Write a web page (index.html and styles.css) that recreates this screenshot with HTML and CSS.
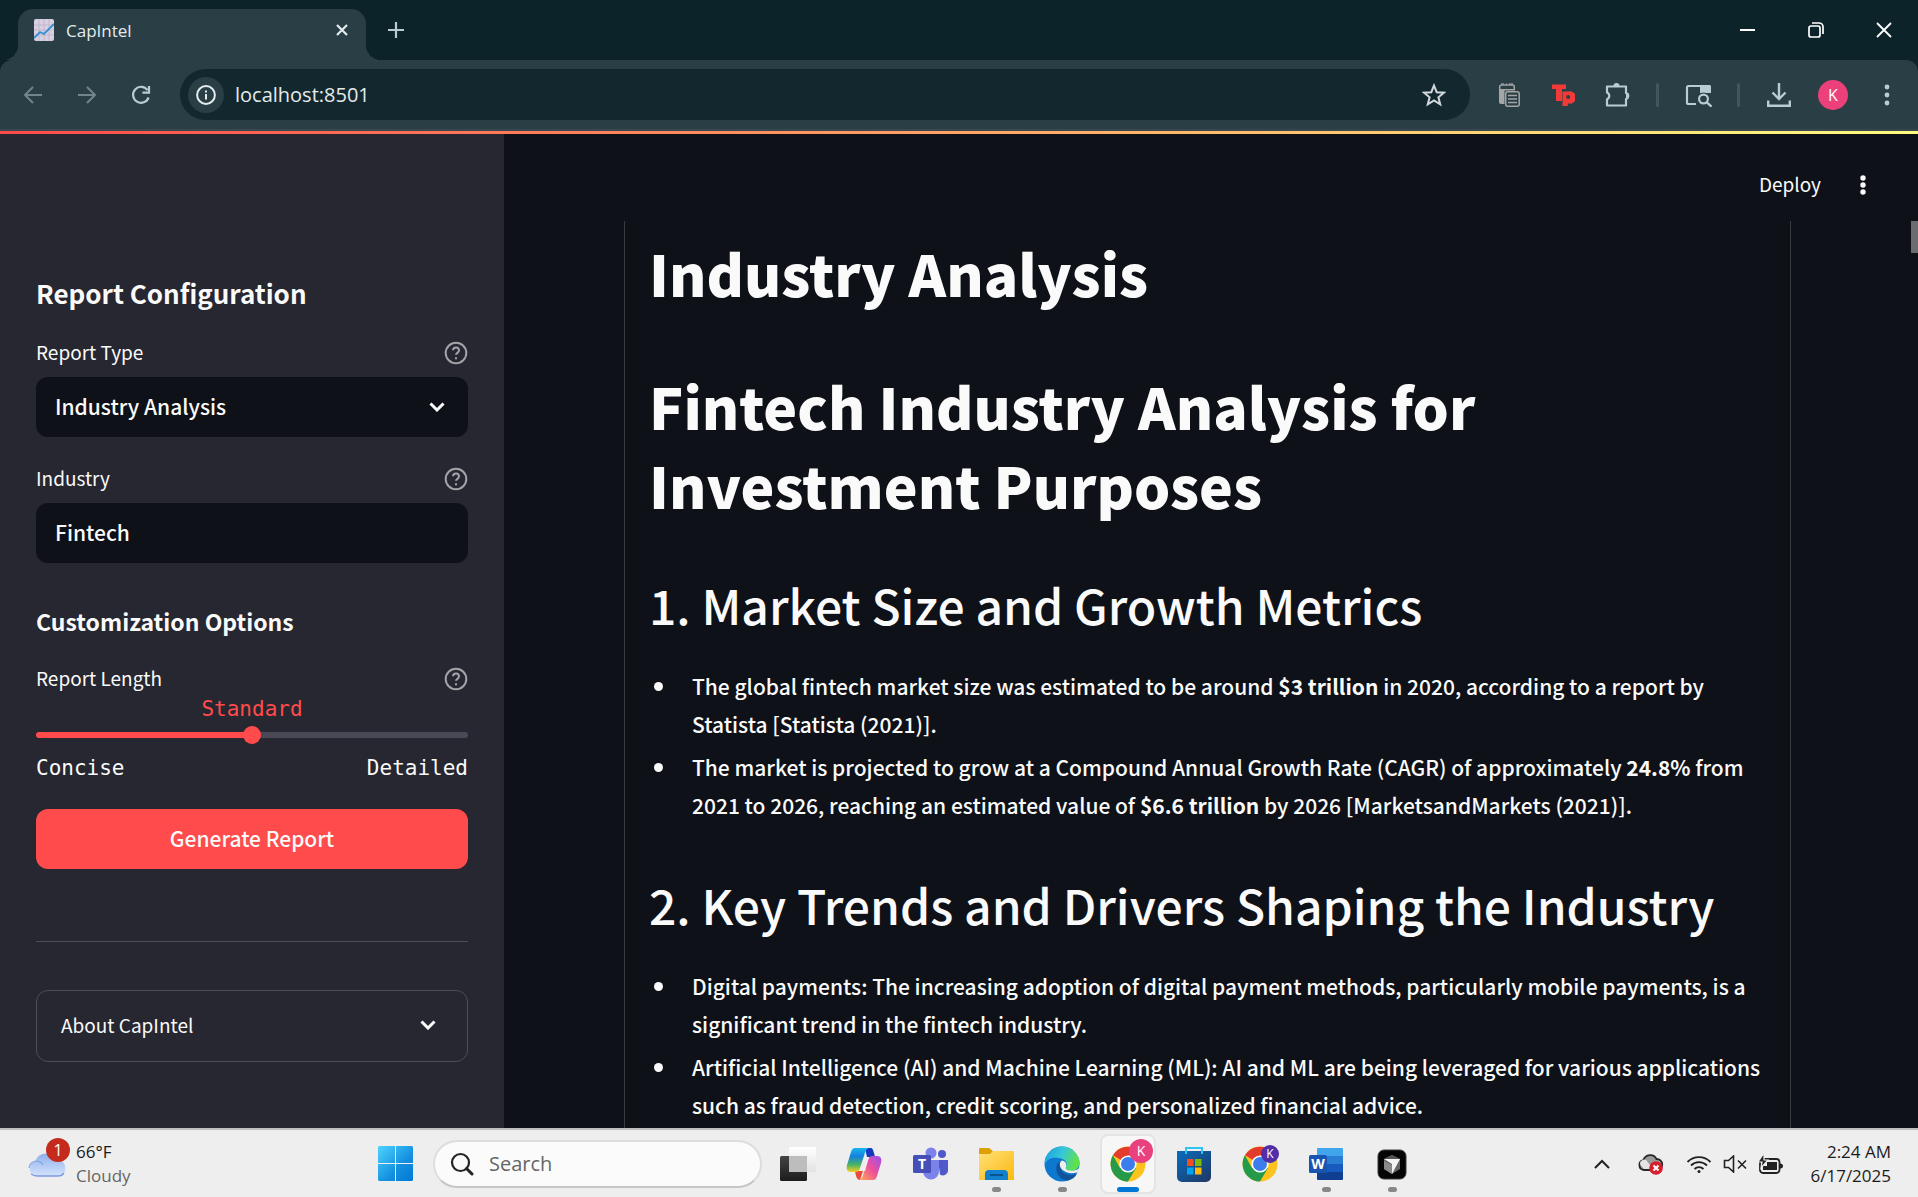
FILE: index.html
```html
<!DOCTYPE html>
<html lang="en">
<head>
<meta charset="utf-8">
<meta name="viewport" content="width=device-width, initial-scale=1">
<title>CapIntel</title>
<link rel="stylesheet" href="styles.css">
</head>
<body>
<div class="desktop">

  <header class="browser">
    <div class="tabstrip">
      <div class="tab">
        <svg class="favicon" viewBox="0 0 20 22" width="20" height="22" aria-hidden="true"><rect width="20" height="22" rx="2" fill="#d9cfe2"/><path d="M0 6h20M0 11h20M0 16h20M5 0v22M10 0v22M15 0v22" stroke="#b9afc6" stroke-width=".7"/><path d="M0 19l6-6 4 2 10-10" fill="none" stroke="#2f8fd0" stroke-width="1.8"/></svg>
        <span class="tab-title">CapIntel</span>
        <button class="icon-button tab-close" aria-label="Close tab"><svg viewBox="0 0 12 12" width="12" height="12"><path d="M1 1l10 10M11 1L1 11" stroke="#e4ebed" stroke-width="2.2"/></svg></button>
      </div>
      <button class="icon-button tab-new" aria-label="New tab"><svg viewBox="0 0 16 16" width="16" height="16"><path d="M8 0v16M0 8h16" stroke="#b8ccd4" stroke-width="2.2"/></svg></button>
      <div class="window-controls">
        <button class="icon-button" aria-label="Minimize"><svg viewBox="0 0 16 16" width="16" height="16"><path d="M0 8h15" stroke="#fff" stroke-width="2"/></svg></button>
        <button class="icon-button" aria-label="Restore"><svg viewBox="0 0 16 16" width="16" height="16" fill="none" stroke="#fff" stroke-width="1.7"><rect x="1" y="4" width="11" height="11" rx="2"/><path d="M4 1h7a4 4 0 0 1 4 4v7"/></svg></button>
        <button class="icon-button" aria-label="Close"><svg viewBox="0 0 16 16" width="16" height="16"><path d="M1 1l14 14M15 1L1 15" stroke="#fff" stroke-width="1.8"/></svg></button>
      </div>
    </div>

    <div class="toolbar">
      <button class="icon-button tool" aria-label="Back"><svg viewBox="0 0 20 20" width="20" height="20" fill="none" stroke="#72858b" stroke-width="2"><path d="M19 10H2M10 2l-8 8 8 8"/></svg></button>
      <button class="icon-button tool" aria-label="Forward"><svg viewBox="0 0 20 20" width="20" height="20" fill="none" stroke="#72858b" stroke-width="2"><path d="M1 10h17M10 2l8 8-8 8"/></svg></button>
      <button class="icon-button tool" aria-label="Reload"><svg viewBox="0 0 20 20" width="20" height="20" fill="none" stroke="#b8ccd4" stroke-width="2.2"><path d="M17.6 12.5A8 8 0 1 1 16.5 5"/><path d="M18 1v6.600h-6.600"/></svg></button>
      <div class="omnibox">
        <button class="icon-button site-info" aria-label="Site information"><svg viewBox="0 0 20 20" width="20" height="20"><circle cx="10" cy="10" r="8.900" fill="none" stroke="#e4ebed" stroke-width="2"/><path d="M10 9v5.500M10 5.400v2" stroke="#e4ebed" stroke-width="2"/></svg></button>
        <input class="address" type="text" value="localhost:8501" aria-label="Address">
        <button class="icon-button tool" aria-label="Bookmark"><svg viewBox="0 0 24 24" width="24" height="24"><path d="M12 2.500l2.700 6.700 7.200.5-5.500 4.600 1.800 7-6.200-3.900-6.200 3.900 1.800-7-5.500-4.600 7.200-.5z" fill="none" stroke="#d3d9dc" stroke-width="2"/></svg></button>
      </div>
      <div class="extensions">
        <button class="icon-button tool" aria-label="Clipboard"><svg viewBox="0 0 22 24" width="22" height="24"><path d="M3 1h3M8 1h1M11 1h4" stroke="#8f9496" stroke-width="1.500"/><path d="M1 6h16v15H3a2 2 0 0 1-2-2z" fill="#a3a5a6"/><path d="M1.700 6V4q0-2 2-2h10.600q2 0 2 2v2" fill="none" stroke="#a3a5a6" stroke-width="1.500"/><rect x="6.500" y="7.500" width="15.500" height="16.500" fill="#293f45"/><rect x="7.700" y="8.700" width="13.500" height="14.500" rx="2" fill="#293f45" stroke="#a3a5a6" stroke-width="1.500"/><path d="M10 12.500h9M10 16h9M10 19.500h9" stroke="#a3a5a6" stroke-width="1.500"/></svg></button>
        <button class="icon-button tool" aria-label="Teleprompter"><svg viewBox="0 0 24 24" width="24" height="24"><path d="M1 1.500h14v4.500h-4v12H5V6H1z" fill="#f23b36"/><path d="M11.500 8.500h5.300a6.200 6.200 0 1 1 0 11.800V23h-5.300z" fill="#f23b36"/><circle cx="17.200" cy="14" r="2" fill="#293f45"/></svg></button>
        <button class="icon-button tool" aria-label="Extensions"><svg viewBox="0 0 26 26" width="26" height="26"><path d="M3 4.500h19v6.500a3.200 3.200 0 0 1 0 6v6.500H3v-6.300a3.600 3.600 0 0 0 0-6.700z" fill="none" stroke="#b8ccd4" stroke-width="2.200" stroke-linejoin="round"/><path d="M9.500 4a3 3 0 0 1 6 0zM22 10.500a3.300 3.300 0 0 1 0 6.600z" fill="#b8ccd4"/></svg></button>
        <span class="tool-divider"></span>
        <button class="icon-button tool" aria-label="Search this page"><svg viewBox="0 0 27 24" width="27" height="24"><path d="M11 21H3.500A1.500 1.500 0 0 1 2 19.500v-15A1.500 1.500 0 0 1 3.500 3H24v6" fill="none" stroke="#b8ccd4" stroke-width="2.200"/><path d="M15 2h9.500a1.500 1.500 0 0 1 1.500 1.500V10H15z" fill="#b8ccd4"/><circle cx="18.500" cy="16" r="6.500" fill="#293f45"/><circle cx="18.500" cy="16" r="4.400" fill="none" stroke="#b8ccd4" stroke-width="2.200"/><path d="M21.500 19l5 4.700" stroke="#b8ccd4" stroke-width="2.400"/></svg></button>
        <span class="tool-divider"></span>
        <button class="icon-button tool" aria-label="Downloads"><svg viewBox="0 0 24 24" width="24" height="24" fill="none" stroke="#b8ccd4" stroke-width="2.400"><path d="M12 0v16M5.500 9.500L12 16l6.500-6.500"/><path d="M1.200 17.500v5.300h21.600v-5.300"/></svg></button>
        <button class="icon-button tool" aria-label="Profile"><span class="avatar">K</span></button>
        <button class="icon-button tool" aria-label="Menu"><svg viewBox="0 0 6 22" width="6" height="22" fill="#b8ccd4"><circle cx="3" cy="3" r="2.400"/><circle cx="3" cy="11" r="2.400"/><circle cx="3" cy="19" r="2.400"/></svg></button>
      </div>
    </div>
  </header>

  <div class="app">
    <aside class="sidebar">
      <h2 class="side-title">Report Configuration</h2>

      <div class="field-head">
        <label for="report-type">Report Type</label>
        <svg class="help" viewBox="0 0 24 24" width="24" height="24"><circle cx="12" cy="12" r="10.300"/><path d="M9 9.300a3 3 0 0 1 6 .3c0 2-3 2.500-3 4.200M12 16.200v2"/></svg>
      </div>
      <div class="select-wrap">
        <select class="control" id="report-type"><option>Industry Analysis</option></select>
        <svg class="chevron" viewBox="0 0 16 10" width="16" height="10"><path d="M1.500 1.500l6.500 6.500 6.500-6.500"/></svg>
      </div>

      <div class="field-head">
        <label for="industry">Industry</label>
        <svg class="help" viewBox="0 0 24 24" width="24" height="24"><circle cx="12" cy="12" r="10.300"/><path d="M9 9.300a3 3 0 0 1 6 .3c0 2-3 2.500-3 4.200M12 16.200v2"/></svg>
      </div>
      <input class="control" id="industry" type="text" value="Fintech">

      <h3 class="side-subtitle">Customization Options</h3>
      <div class="field-head slider-head">
        <label for="length">Report Length</label>
        <svg class="help" viewBox="0 0 24 24" width="24" height="24"><circle cx="12" cy="12" r="10.300"/><path d="M9 9.300a3 3 0 0 1 6 .3c0 2-3 2.500-3 4.200M12 16.200v2"/></svg>
      </div>
      <output class="slider-value" for="length">Standard</output>
      <input class="slider" id="length" type="range" min="0" max="2" value="1">
      <div class="slider-ends"><span>Concise</span><span>Detailed</span></div>

      <button class="generate">Generate Report</button>
      <hr class="rule">
      <details class="about">
        <summary>About CapIntel<svg class="chevron-inline" viewBox="0 0 16 10" width="16" height="10"><path d="M1.500 1.500l6.500 6.500 6.500-6.500"/></svg></summary>
      </details>
    </aside>

    <main class="main">
      <div class="app-header">
        <button class="deploy">Deploy</button>
        <button class="icon-button" aria-label="App menu"><svg viewBox="0 0 6 20" width="6" height="20" fill="#fafafa"><circle cx="3" cy="3" r="2.700"/><circle cx="3" cy="10" r="2.700"/><circle cx="3" cy="17" r="2.700"/></svg></button>
      </div>
      <div class="scroller">
        <article class="report">
          <h1>Industry Analysis</h1>
          <h1>Fintech Industry Analysis for Investment Purposes</h1>
          <h2>1. Market Size and Growth Metrics</h2>
          <ul>
            <li>The global fintech market size was estimated to be around <strong>$3 trillion</strong> in 2020, according to a report by Statista [Statista (2021)].</li>
            <li>The market is projected to grow at a Compound Annual Growth Rate (CAGR) of approximately <strong>24.8%</strong> from 2021 to 2026, reaching an estimated value of <strong>$6.6 trillion</strong> by 2026 [MarketsandMarkets (2021)].</li>
          </ul>
          <h2>2. Key Trends and Drivers Shaping the Industry</h2>
          <ul>
            <li>Digital payments: The increasing adoption of digital payment methods, particularly mobile payments, is a significant trend in the fintech industry.</li>
            <li>Artificial Intelligence (AI) and Machine Learning (ML): AI and ML are being leveraged for various applications such as fraud detection, credit scoring, and personalized financial advice.</li>
          </ul>
        </article>
        <div class="scroll-thumb"></div>
      </div>
    </main>
  </div>

  <footer class="taskbar">
    <div class="weather">
      <div class="weather-icon">
        <svg viewBox="0 0 38 26" width="38" height="26"><defs><linearGradient id="cl" x1="0" y1="0" x2="0" y2="1"><stop offset="0" stop-color="#8fb0ee"/><stop offset="1" stop-color="#d3e2fa"/></linearGradient></defs><path d="M8 25a7.500 7.500 0 0 1-1-14.500A12 12 0 0 1 29 9a8 8 0 0 1 1 16z" fill="url(#cl)"/><path d="M1 17a7.500 7.500 0 0 1 14-3" fill="none" stroke="#86a6e4" stroke-width="1.200"/><path d="M3 23q3 2 6 2h21q4 0 6-3" fill="none" stroke="#7b9be0" stroke-width="1.400"/></svg>
        <span class="badge">1</span>
      </div>
      <div class="weather-text"><span>66°F</span><span class="muted">Cloudy</span></div>
    </div>

    <button class="icon-button" aria-label="Start"><svg viewBox="0 0 35 35" width="35" height="35"><defs><linearGradient id="wn" x1="0" y1="0" x2="1" y2="1"><stop offset="0" stop-color="#4fd3ff"/><stop offset=".6" stop-color="#1490df"/><stop offset="1" stop-color="#0078d4"/></linearGradient></defs><path d="M1 0h16v17H0V1zM18 0h16l1 1v16H18zM0 18h17v17H1l-1-1zM18 18h17v16l-1 1H18z" fill="url(#wn)"/></svg></button>
    <label class="search">
      <svg viewBox="0 0 24 24" width="24" height="24" fill="none" stroke="#242424"><circle cx="10.500" cy="10.500" r="8.500" stroke-width="2.200"/><path d="M16.500 16.500l5.500 5.500" stroke-width="3" stroke-linecap="round"/></svg>
      <input type="text" placeholder="Search" aria-label="Search">
    </label>

    <nav class="pins">
      <button class="pin" aria-label="Task view"><svg viewBox="0 0 36 36" width="36" height="36"><defs><linearGradient id="tv" x1="0" y1="0" x2="0" y2="1"><stop offset="0" stop-color="#444"/><stop offset="1" stop-color="#1c1c1c"/></linearGradient><linearGradient id="tw" x1="0" y1="0" x2="0" y2="1"><stop offset="0" stop-color="#fff"/><stop offset="1" stop-color="#e2e2e2"/></linearGradient></defs><rect x="0" y="10" width="27" height="25" rx="1.500" fill="url(#tv)"/><rect x="9" y="1" width="27" height="25" rx="1.500" fill="url(#tw)"/><rect x="9" y="10" width="18" height="16" fill="#bdbdbd"/></svg></button>
      <button class="pin" aria-label="Copilot"><svg viewBox="0 0 36 36" width="36" height="36"><defs><linearGradient id="cp1" x1="0" y1="0" x2="0" y2="1"><stop offset="0" stop-color="#18b5f0"/><stop offset=".35" stop-color="#1480dd"/><stop offset=".7" stop-color="#4cb463"/><stop offset="1" stop-color="#f6cf1c"/></linearGradient><linearGradient id="cp2" x1="1" y1="0" x2="0" y2="1"><stop offset="0" stop-color="#9a4ff0"/><stop offset=".5" stop-color="#ee5098"/><stop offset="1" stop-color="#ffab52"/></linearGradient></defs><path d="M19 2h5c3 0 3 2 4 5l1 4h-8z" fill="#1738bd"/><path d="M9 25h8l-3 9c-3 0-4-3-5-9z" fill="#ea4b3b"/><path d="M9 2h14c-3 1-4 4-5 8l-4 12c-1 3-2 4-5 4H5c-4 0-5-3-4-7l4-13c1-3 2-4 4-4z" fill="url(#cp1)"/><path d="M27 34H13c3-1 4-4 5-8l4-12c1-3 2-4 5-4h4c4 0 5 3 4 7l-4 13c-1 3-2 4-4 4z" fill="url(#cp2)"/><path d="M18 11h5l-4 14h-5z" fill="#eee"/></svg></button>
      <button class="pin" aria-label="Teams"><svg viewBox="0 0 36 36" width="36" height="36"><circle cx="19" cy="7" r="5.500" fill="#7b83eb"/><circle cx="30" cy="8" r="4" fill="#5059c9"/><path d="M26 14h10v11a5 5 0 0 1-8 3.500z" fill="#5059c9"/><path d="M11 14h16v11a8 8 0 0 1-16 1z" fill="#7b83eb"/><rect x="1" y="9" width="18" height="18" rx="1.500" fill="#464eb8"/><text x="10" y="23" class="letter">T</text></svg></button>
      <button class="pin is-open" aria-label="File Explorer"><svg viewBox="0 0 36 36" width="36" height="36"><defs><linearGradient id="fo" x1="0" y1="0" x2="1" y2="1"><stop offset="0" stop-color="#ffe07a"/><stop offset="1" stop-color="#fbb90e"/></linearGradient></defs><path d="M1 9V3q0-1 1-1h9l4 3-3 4z" fill="#dda005"/><path d="M1 8h11l3-3h20q1 0 1 1v28H1z" fill="url(#fo)"/><path d="M7 34v-6q0-4 4-4h15q4 0 4 4v6z" fill="#1180cf"/><path d="M12 29h13" stroke="#0a548f" stroke-width="2"/></svg></button>
      <button class="pin is-open" aria-label="Edge"><svg viewBox="0 0 36 36" width="36" height="36"><defs><linearGradient id="e1" x1="0" y1="0" x2="1" y2=".3"><stop offset="0" stop-color="#1a9ee0"/><stop offset=".55" stop-color="#36c8d8"/><stop offset="1" stop-color="#61e04e"/></linearGradient></defs><circle cx="18" cy="18" r="17.500" fill="#0d78cf"/><path d="M1 14A17.500 17.500 0 0 1 35.500 17c0 5-4 8-9 8-4 0-6-2-5-4 3-5-1-8-7-9C9 11 4 12 1 18z" fill="url(#e1)"/><path d="M14 17c-4 5-1 17 10 17.500 4-1 7-3 9-7-6 3-14 1-16-4-1-3 0-5 2-7-2-1-4 0-5 .5z" fill="#11539b"/><path d="M18 14.500c-3 2-3 6 0 9 4 3.500 9 4.500 15 3l3-3v-2c-3 3-7 3.500-11 3-3-.5-4-2-3-4 1-3-1-5.500-4-6z" fill="#eee"/></svg></button>
      <button class="pin is-active" aria-label="Chrome"><svg viewBox="0 0 36 36" width="36" height="36"><circle cx="18" cy="18" r="17.500" fill="#fcc31e"/><path d="M18 18L2.900 9.300A17.500 17.500 0 0 1 33.200 9.500H18z" fill="#e33b2e"/><path d="M2.900 9.300A17.500 17.500 0 0 0 18 35.500l8-13.500-8-4-8 4z" fill="#259b4a"/><circle cx="18" cy="18" r="8.600" fill="#fff"/><circle cx="18" cy="18" r="7" fill="#3b7ded"/></svg><span class="pin-user">K</span></button>
      <button class="pin" aria-label="Store"><svg viewBox="0 0 36 36" width="36" height="36"><defs><linearGradient id="st" x1="0" y1="0" x2="1" y2="1"><stop offset="0" stop-color="#0a6cbd"/><stop offset="1" stop-color="#1f3763"/></linearGradient></defs><path d="M1 5h34v26a5 5 0 0 1-5 5H6a5 5 0 0 1-5-5z" fill="url(#st)"/><path d="M10 8V2h16v6" fill="none" stroke="#2dc5f2" stroke-width="2"/><path d="M11 13h6.500v7H11z" fill="#f25022"/><path d="M19 13h6.500v7H19z" fill="#7fba00"/><path d="M11 21.500h6.500v7H11z" fill="#00a4ef"/><path d="M19 21.500h6.500v7H19z" fill="#ffb900"/></svg></button>
      <button class="pin" aria-label="Chrome, second profile"><svg viewBox="0 0 36 36" width="36" height="36"><circle cx="18" cy="18" r="17.500" fill="#fcc31e"/><path d="M18 18L2.900 9.300A17.500 17.500 0 0 1 33.200 9.500H18z" fill="#e33b2e"/><path d="M2.900 9.300A17.500 17.500 0 0 0 18 35.500l8-13.500-8-4-8 4z" fill="#259b4a"/><circle cx="18" cy="18" r="8.600" fill="#fff"/><circle cx="18" cy="18" r="7" fill="#3b7ded"/></svg><span class="pin-user pin-user-small">K</span></button>
      <button class="pin is-open" aria-label="Word"><svg viewBox="0 0 36 36" width="36" height="36"><path d="M10 2h24q1 0 1 1v7H9V3q0-1 1-1z" fill="#41a5ee"/><path d="M9 10h26v8H9z" fill="#2b7cd3"/><path d="M9 18h26v8H9z" fill="#185abd"/><path d="M9 26h26v7q0 1-1 1H10q-1 0-1-1z" fill="#103f91"/><rect x="1" y="9" width="18" height="18" rx="1.500" fill="#1855b0"/><text x="10" y="23" class="letter">W</text></svg></button>
      <button class="pin is-open" aria-label="Cursor"><svg viewBox="0 0 36 36" width="36" height="36"><rect x="4" y="4" width="28" height="29" rx="6" fill="#050505" stroke="#3a3a3a"/><path d="M18 9l8 4v10l-8 5-8-5V13z" fill="#666"/><path d="M10 13l8-4 8 4-8 2z" fill="#555"/><path d="M10 13h16l-8 15V18z" fill="#f4f4f4"/><path d="M10 15l8 4v9l-8-5z" fill="#8a8a8a"/></svg></button>
    </nav>

    <div class="tray">
      <svg class="tray-up" viewBox="0 0 16 10" width="16" height="10"><path d="M1 9l7-7 7 7" fill="none" stroke="#222" stroke-width="2"/></svg>
      <svg class="tray-cloud" viewBox="0 0 26 22" width="26" height="22"><path d="M6 17a5 5 0 0 1-.5-9.900A7 7 0 0 1 18.500 6 5.500 5.500 0 0 1 19 17z" fill="#9b9b9b" stroke="#262626" stroke-width="1.800"/><path d="M2.500 12a3.500 3.500 0 0 1 7-3l6 7H6z" fill="#e4e4e4"/><circle cx="18" cy="15" r="6.800" fill="#d81e2c"/><path d="M15.500 12.500l5 5M20.500 12.500l-5 5" stroke="#fff" stroke-width="2"/></svg>
      <svg viewBox="0 0 26 20" width="26" height="20" fill="none" stroke="#222" stroke-width="1.800"><path d="M1.500 8a16 16 0 0 1 23 0M5 11.500a11.300 11.300 0 0 1 16 0M8.500 15a6.300 6.300 0 0 1 9 0"/><circle cx="13" cy="17.500" r="1.500" fill="#222" stroke="none"/></svg>
      <svg viewBox="0 0 24 18" width="24" height="18" fill="none" stroke="#222" stroke-width="1.600"><path d="M1.500 5.500v7h4l5 4.500V1l-5 4.500z"/><path d="M15 5.500l8 8M23 5.500l-8 8"/></svg>
      <svg viewBox="0 0 26 20" width="26" height="20"><rect x="2" y="5" width="19.500" height="14" rx="3" fill="none" stroke="#222" stroke-width="1.800"/><path d="M9 8h10v8H5v-4h4z" fill="#222"/><path d="M22 9.500q3 0 3 2.500t-3 2.500z" fill="#222"/><path d="M6-1L0 8h4l-1 6 7-8H6z" fill="#222" stroke="#eee" stroke-width="1.200"/></svg>
      <div class="clock"><span>2:24 AM</span><span>6/17/2025</span></div>
    </div>
  </footer>
</div>
</body>
</html>
```
FILE: styles.css
```css
* { box-sizing: border-box; }

:root {
  --source: "Noto Sans CJK SC", sans-serif;
  --source-mono: "DejaVu Sans Mono", monospace;
  --system: "Open Sans", sans-serif;
  --strip: #0c2329;
  --bar: #293f45;
  --page: #0e1117;
  --side: #262730;
  --red: #ff4b4b;
  --text: #fafafa;
}

body { margin: 0; background: var(--page); }
h1, h2, h3, ul { margin: 0; padding: 0; }
button, input, select { font: inherit; color: inherit; }

.desktop {
  display: flex;
  flex-direction: column;
  height: 100vh;
  overflow: hidden;
}

.icon-button {
  display: flex;
  align-items: center;
  justify-content: center;
  padding: 0;
  border: 0;
  background: none;
}

/* Browser chrome */
.browser {
  flex: none;
  background: var(--strip);
  font-family: var(--system);
  color: #e4ebed;
}

.tabstrip { display: flex; height: 60px; padding-left: 18px; }

.tab {
  position: relative;
  display: flex;
  align-items: center;
  flex: 0 1 348px;
  margin-top: 9px;
  padding: 0 18px 9px 16px;
  border-radius: 15px 15px 0 0;
  background: var(--bar);
}

.tab::before, .tab::after {
  content: "";
  position: absolute;
  bottom: 0;
  width: 15px;
  height: 15px;
}
.tab::before { right: 100%; background: radial-gradient(circle at 0 0, transparent 15px, var(--bar) 15px); }
.tab::after { left: 100%; background: radial-gradient(circle at 100% 0, transparent 15px, var(--bar) 15px); }

.tab-title { margin-left: 12px; padding-top: 2px; font-size: 17px; line-height: 24px; }
.tab-close { margin-left: auto; }
.tab-new { width: 60px; }

.window-controls { display: flex; margin-left: auto; }
.window-controls .icon-button { width: 68px; }

.toolbar {
  display: flex;
  align-items: center;
  height: 71px;
  padding: 0 4px 0 6px;
  border-radius: 12px 12px 0 0;
  border-bottom: 2px solid #3a474e;
  background: var(--bar);
}

.tool { width: 54px; height: 36px; }

.omnibox {
  display: flex;
  align-items: center;
  flex: 1;
  height: 51px;
  margin: 0 12px;
  padding-left: 8px;
  border-radius: 26px;
  background: #13282e;
}
.omnibox .tool { margin-right: 9px; }
.site-info { width: 36px; height: 36px; border-radius: 50%; background: var(--bar); }
.address {
  flex: 1;
  min-width: 0;
  margin-left: 11px;
  padding: 0;
  border: 0;
  background: none;
  font-size: 20px;
  line-height: 28px;
}

.extensions { display: flex; align-items: center; }
.tool-divider { width: 3px; height: 24px; margin: 0 12px; border-radius: 2px; background: #3f575f; }
.avatar {
  width: 30px;
  height: 30px;
  border-radius: 50%;
  background: #ec407a;
  color: #fff;
  font-size: 16px;
  line-height: 30px;
}

/* Application */
.app {
  position: relative;
  display: flex;
  flex: 1;
  min-height: 0;
  font-family: var(--source);
  color: var(--text);
}
.app::before {
  content: "";
  position: absolute;
  inset: 0 0 auto 0;
  height: 3px;
  background: linear-gradient(90deg, #ff4b4b, #fffd80);
}

.sidebar {
  flex: none;
  width: 504px;
  padding: 144px 36px 0;
  background: var(--side);
}

.side-title { font-size: 26px; line-height: 36px; font-weight: 700; }
.side-subtitle { margin-top: 42px; font-size: 23px; line-height: 32px; font-weight: 700; }

.field-head {
  display: flex;
  align-items: center;
  justify-content: space-between;
  margin: 30px 0 12px;
  font-size: 19px;
  line-height: 22px;
}
.field-head label { padding-bottom: 2px; }
.slider-head { margin-bottom: 6px; }
.help { fill: none; stroke: #a3a4a8; stroke-width: 2; }

.control {
  display: block;
  width: 100%;
  height: 60px;
  padding: 0 19px 2px;
  border: 0;
  border-radius: 12px;
  appearance: none;
  background: var(--page);
  font-size: 21px;
  font-weight: 500;
  line-height: 36px;
}
.select-wrap { position: relative; }
.chevron { position: absolute; top: 25px; right: 23px; pointer-events: none; }
.chevron, .chevron-inline { fill: none; stroke: var(--text); stroke-width: 3; }

.slider-value, .slider-ends { font-family: var(--source-mono); font-size: 21px; line-height: 24px; }
.slider-value { display: block; text-align: center; color: var(--red); }
.slider-ends { display: flex; justify-content: space-between; }

.slider {
  display: block;
  width: 100%;
  height: 18px;
  margin: 5px 0 12px;
  appearance: none;
  background: none;
}
.slider::-webkit-slider-runnable-track {
  height: 6px;
  border-radius: 3px;
  background: linear-gradient(90deg, var(--red) 50%, #484954 50%);
}
.slider::-webkit-slider-thumb {
  width: 18px;
  height: 18px;
  margin-top: -6px;
  border-radius: 50%;
  appearance: none;
  background: var(--red);
}

.generate {
  display: block;
  width: 100%;
  height: 60px;
  margin-top: 29px;
  padding-bottom: 3px;
  border: 0;
  border-radius: 12px;
  background: var(--red);
  font-size: 21px;
  font-weight: 500;
}

.rule { height: 1px; margin: 72px 0 48px; border: 0; background: #4c4d55; }

.about { border: 1px solid #4c4d55; border-radius: 12px; }
.about summary {
  display: flex;
  align-items: center;
  justify-content: space-between;
  height: 70px;
  padding: 0 31px 3px 24px;
  font-size: 19px;
}

.main { display: flex; flex-direction: column; flex: 1; min-width: 0; background: var(--page); }

.app-header {
  display: flex;
  align-items: center;
  justify-content: flex-end;
  gap: 39px;
  flex: none;
  height: 90px;
  padding: 18px 52px 0 0;
}
.deploy { padding: 0 0 2px; border: 0; background: none; font-size: 19px; line-height: 24px; }

.scroller { position: relative; flex: 1; min-height: 0; padding: 0 127px 0 120px; overflow: hidden; }
.scroll-thumb { position: absolute; top: 0; right: 0; width: 7px; height: 32px; background: #6b6c70; }

.report {
  min-height: 100%;
  padding: 12px 24px 60px;
  border: solid #3a3c42;
  border-width: 0 1px;
}
.report h1 { font-size: 57px; line-height: 79px; font-weight: 900; }
.report h1 + h1 { margin-top: 54px; }
.report h2 { margin: 48px 0 30px; font-size: 48px; line-height: 65px; font-weight: 500; }
.report ul { list-style: none; font-size: 21px; line-height: 38px; font-weight: 500; }
.report li { position: relative; margin-bottom: 5px; padding-left: 43px; }
.report li::before {
  content: "";
  position: absolute;
  top: 15px;
  left: 5px;
  width: 9px;
  height: 9px;
  border-radius: 50%;
  background: var(--text);
}

/* Taskbar */
.taskbar {
  display: flex;
  align-items: center;
  flex: none;
  height: 69px;
  padding-left: 28px;
  border-top: 2px solid #bfbfbf;
  background: #eee;
  font-family: var(--system);
  font-size: 17px;
  line-height: 24px;
  color: #1b1b1b;
}

.weather { display: flex; align-items: center; gap: 10px; width: 350px; }
.weather-icon { position: relative; height: 26px; }
.badge {
  position: absolute;
  top: -13px;
  right: -4px;
  width: 24px;
  height: 24px;
  border-radius: 50%;
  background: #c42b1c;
  color: #fff;
  font-size: 16px;
  text-align: center;
}
.weather-text, .clock { display: flex; flex-direction: column; }
.muted { color: #666; }

.search {
  display: flex;
  align-items: center;
  gap: 15px;
  flex: 0 1 329px;
  height: 48px;
  margin: 0 3px 0 20px;
  padding-left: 15px;
  border: 2px solid #ddd;
  border-bottom-color: #c6c6c6;
  border-radius: 24px;
  background: #fbfbfb;
}
.search input { width: 200px; padding: 0; border: 0; background: none; font-size: 20px; }
.search input::placeholder { color: #666; }

.pins { display: flex; flex: none; }
.pin {
  position: relative;
  display: flex;
  align-items: center;
  justify-content: center;
  flex: none;
  width: 56px;
  height: 60px;
  margin: 0 5px;
  padding: 0;
  border: 2px solid transparent;
  border-radius: 8px;
  background: none;
}
.is-open::after, .is-active::after {
  content: "";
  position: absolute;
  bottom: 0;
  width: 9px;
  height: 5px;
  border-radius: 3px;
  background: #888;
}
.is-active { border-color: #e4e4e4; background: #f7f7f7; }
.is-active::after { width: 22px; background: #0078d4; }
.pin-user {
  position: absolute;
  top: 3px;
  right: 1px;
  width: 24px;
  height: 24px;
  border-radius: 50%;
  background: #e8417e;
  color: #fff;
  font-size: 14px;
  line-height: 24px;
}
.pin-user-small { top: 9px; right: 7px; width: 18px; height: 18px; background: #512da8; font-size: 12px; line-height: 18px; }
.letter { fill: #fff; font: 700 14px var(--system); text-anchor: middle; }

.tray { display: flex; align-items: center; gap: 11px; margin-left: auto; padding-right: 27px; }
.tray-up { margin-right: 17px; }
.tray-cloud { margin-right: 11px; }
.clock { margin-left: 15px; text-align: right; }
```
